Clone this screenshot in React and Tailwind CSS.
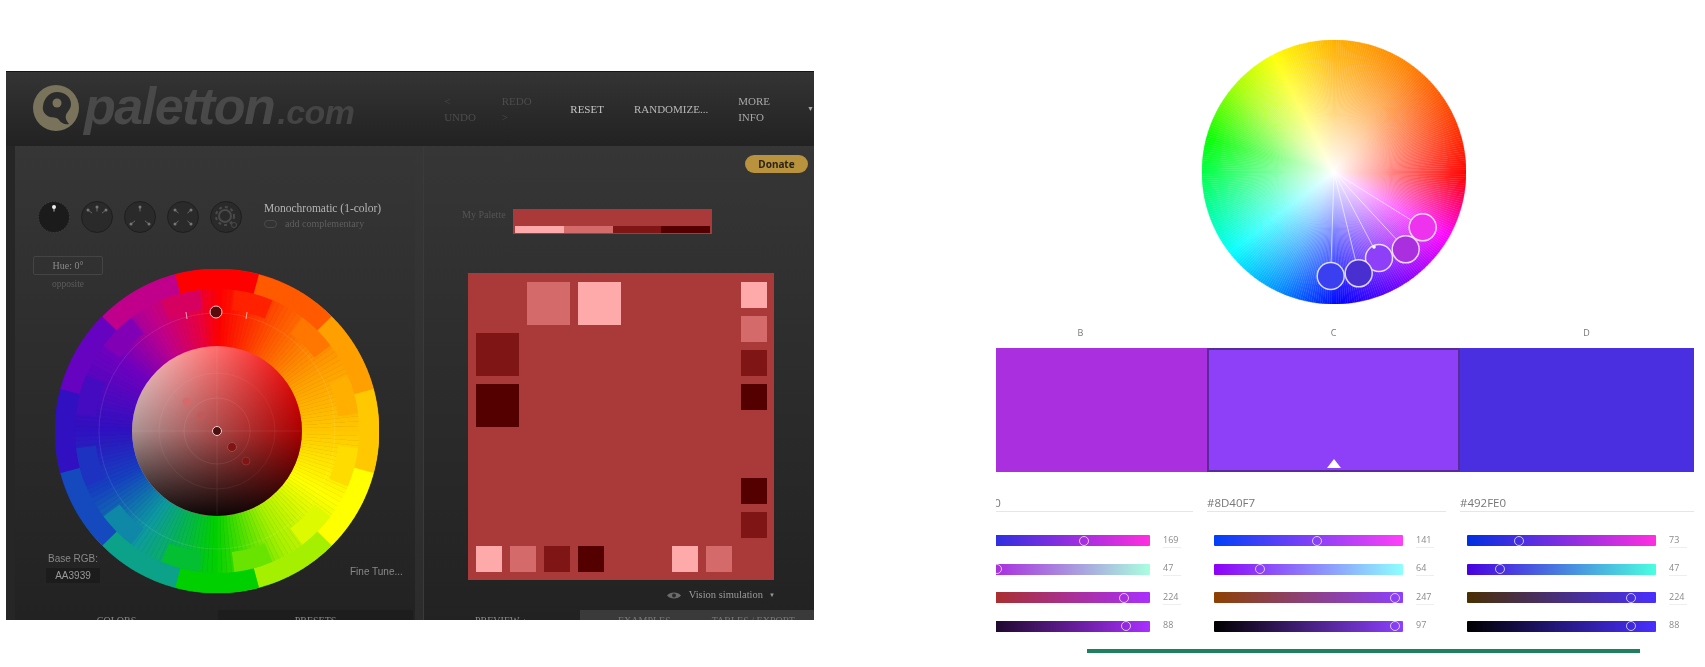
import React from 'react';

const lerp = (a, b, t) => a + (b - a) * t;
const hex = (c) => [1, 3, 5].map((i) => parseInt(c.slice(i, i + 2), 16));

// angle (clockwise from top) -> colour
const colorAt = (stops, angle) => {
  const a = ((angle % 360) + 360) % 360;
  for (let i = 0; i < stops.length - 1; i++) {
    const [a0, c0] = stops[i];
    const [a1, c1] = stops[i + 1];
    if (a >= a0 && a <= a1) {
      const t = (a - a0) / (a1 - a0);
      const x = hex(c0);
      const y = hex(c1);
      return `rgb(${x.map((v, k) => Math.round(lerp(v, y[k], t))).join(',')})`;
    }
  }
  return stops[0][1];
};

const wedge = (cx, cy, r0, r1, a0, a1) => {
  const p = (r, a) => {
    const rad = ((a - 90) * Math.PI) / 180;
    return `${(cx + r * Math.cos(rad)).toFixed(2)} ${(cy + r * Math.sin(rad)).toFixed(2)}`;
  };
  return `M${p(r0, a0)} A${r0} ${r0} 0 0 1 ${p(r0, a1)} L${p(r1, a1)} A${r1} ${r1} 0 0 0 ${p(r1, a0)} Z`;
};

const rybStops = [
  [0, '#ff0000'], [30, '#ff5a00'], [45, '#ff8000'], [60, '#ffa000'], [90, '#ffc800'],
  [120, '#ffff00'], [150, '#a5f000'], [180, '#00d000'], [215, '#0d9aa0'], [243, '#1540c0'],
  [270, '#3010c0'], [306, '#7000c0'], [330, '#c0008a'], [350, '#e80040'], [360, '#ff0000'],
];

const rgbStops = [
  [0, '#ffb000'], [35, '#ff8000'], [92, '#ff0000'], [119, '#ff00ff'], [150, '#7000ff'],
  [177, '#0000ff'], [205, '#0090ff'], [232, '#00ffff'], [258, '#00ff80'], [284, '#00ff00'],
  [310, '#a0ff00'], [332, '#ffff00'], [360, '#ffb000'],
];

const range = (n) => Array.from({ length: n }, (_, i) => i);

const Logo = () => (
  <svg width="48" height="48" viewBox="0 0 48 48" className="shrink-0">
    <circle cx="23" cy="23" r="23" fill="#78735a" />
    <path d="M24 7c8 0 14 5 14 12 0 5-4 8-5 11-1 4 1 6 3 9-4 1-8-1-10-4-2-3-5-2-9-3-5-2-8-6-7-11 1-8 7-14 14-14z" fill="#2b2b2b" />
    <circle cx="24" cy="18" r="4.5" fill="#78735a" />
  </svg>
);

const ModeIcon = ({ active, kind }) => {
  const dots = {
    mono: [[0, -10]],
    adjacent: [[-9, -7], [0, -10], [9, -7]],
    triad: [[0, -10], [-9, 7], [9, 7]],
    tetrad: [[-8, -7], [8, -7], [-8, 7], [8, 7]],
    free: [],
  }[kind];
  return (
    <svg width="32" height="32" viewBox="-16 -16 32 32">
      <circle r="15.5" fill={active ? '#1b1b1b' : '#2a2a2a'} stroke={active ? '#444' : '#1f1f1f'} strokeDasharray={active ? '1.5 1.5' : undefined} />
      {dots.map(([x, y], i) => (
        <g key={i}>
          <line x1={x * 0.55} y1={y * 0.55} x2={x} y2={y} stroke={active ? '#bbb' : '#666'} strokeWidth="1" />
          <circle cx={x} cy={y} r={active ? 2 : 1.5} fill={active ? '#eee' : '#777'} />
        </g>
      ))}
      {kind === 'free' && (
        <g fill="none" stroke="#4a4a4a" strokeWidth="2">
          <circle cx="-1" cy="-1" r="6" />
          <circle cx="-1" cy="-1" r="9" strokeDasharray="3 3" />
          <circle cx="8" cy="8" r="2.5" strokeWidth="1" />
        </g>
      )}
    </svg>
  );
};

const ColorWheel = () => (
  <svg width="324" height="324" viewBox="0 0 324 324" className="block">
    <defs>
      <linearGradient id="shadeH" x1="0" x2="1" y1="0" y2="0">
        <stop offset="0" stopColor="#ffd9d9" />
        <stop offset="1" stopColor="#ff0000" />
      </linearGradient>
      <linearGradient id="shadeV" x1="0" x2="0" y1="0" y2="1">
        <stop offset="0" stopColor="#000" stopOpacity="0" />
        <stop offset="0.5" stopColor="#000" stopOpacity="0.33" />
        <stop offset="1" stopColor="#000" stopOpacity="0.95" />
      </linearGradient>
    </defs>
    {range(180).map((i) => {
      const c = colorAt(rybStops, i * 2);
      return <path key={i} d={wedge(162, 162, 80, 162, i * 2, i * 2 + 2)} fill={c} stroke={c} strokeWidth="0.6" />;
    })}
    {range(12).map((i) => {
      const c = colorAt(rybStops, i * 30);
      return <path key={i} d={wedge(162, 162, 142, 162, i * 30 - 15, i * 30 + 15)} fill={c} />;
    })}
    {range(12).map((i) => {
      const c = colorAt(rybStops, i * 30 + 11);
      return <path key={i} d={wedge(162, 162, 122, 142, i * 30 + 7, i * 30 + 23)} fill={c} />;
    })}
    <circle cx="162" cy="162" r="118" fill="none" stroke="#fff" strokeOpacity="0.1" />
    <circle cx="162" cy="162" r="85" fill="url(#shadeH)" />
    <circle cx="162" cy="162" r="85" fill="url(#shadeV)" />
    <circle cx="162" cy="162" r="33" fill="none" stroke="#fff" strokeOpacity="0.08" />
    <circle cx="162" cy="162" r="58" fill="none" stroke="#fff" strokeOpacity="0.06" />
    <path d="M77 162H247M162 77V247" stroke="#fff" strokeOpacity="0.07" />
    <path d="M131 43l1 7M192 43l-1 7" stroke="#fff" strokeOpacity="0.6" />
    <circle cx="161" cy="43" r="6" fill="#5a0c0c" stroke="#f3c4c4" strokeWidth="1" />
    <circle cx="132" cy="133" r="4" fill="#d46a6a" />
    <circle cx="146" cy="147" r="4" fill="#c05a5a" />
    <circle cx="232" cy="0" r="0" />
    <circle cx="177" cy="178" r="4.5" fill="#801515" stroke="#a04a4a" />
    <circle cx="191" cy="192" r="4" fill="#801515" stroke="#8a3030" />
    <circle cx="162" cy="162" r="4.5" fill="#4a0f0f" stroke="#f0d0d0" strokeWidth="1" />
  </svg>
);

const Swatch = ({ size, color, className = '' }) => (
  <div className={`${size === 'lg' ? 'w-[43px] h-[43px]' : 'w-[26px] h-[26px]'} ${className}`} style={{ background: color }} />
);

const LIGHT = '#ffaaaa';
const SOFT = '#d46a6a';
const DARK = '#801515';
const DEEP = '#550000';

const Preview = () => (
  <div className="mt-[39px] ml-[44px] w-[306px] h-[307px] bg-[#aa3939] p-[8px] pt-[9px] flex justify-between">
    <div className="flex flex-col justify-between">
      <div className="grid grid-cols-[43px_43px_43px] gap-[8px]">
        <div />
        <Swatch size="lg" color={SOFT} />
        <Swatch size="lg" color={LIGHT} />
        <Swatch size="lg" color={DARK} />
        <div />
        <div />
        <Swatch size="lg" color={DEEP} />
      </div>
      <div className="flex gap-[8px]">
        <Swatch color={LIGHT} />
        <Swatch color={SOFT} />
        <Swatch color={DARK} />
        <Swatch color={DEEP} />
        <Swatch color={LIGHT} className="ml-[60px]" />
        <Swatch color={SOFT} />
      </div>
    </div>
    <div className="flex flex-col justify-between pb-[34px] mr-[-1px]">
      <div className="flex flex-col gap-[8px]">
        <Swatch color={LIGHT} />
        <Swatch color={SOFT} />
        <Swatch color={DARK} />
        <Swatch color={DEEP} />
      </div>
      <div className="flex flex-col gap-[8px]">
        <Swatch color={DEEP} />
        <Swatch color={DARK} />
      </div>
    </div>
  </div>
);

const PalettonPanel = () => (
  <div className="w-[808px] h-[549px] mt-[71px] shrink-0 overflow-hidden bg-[#242424] flex flex-col font-['Liberation_Serif',serif]">
    <header className="h-[75px] shrink-0 flex items-center border-t border-[#151515] bg-gradient-to-b from-[#343434] to-[#222222] pl-[27px]">
      <div className="w-[412px] flex items-center gap-[3px] font-['Liberation_Sans',sans-serif] italic">
        <Logo />
        <span className="text-[52px] leading-none font-bold text-[#494949] tracking-[-1.5px] pb-[6px]">paletton</span>
        <span className="text-[34px] leading-none font-bold text-[#444444] self-end pb-[9px] tracking-[-0.5px]">.com</span>
      </div>
      <nav className="flex items-center text-[11px] uppercase">
        <span className="text-[#4c4c4c]">&lt; Undo</span>
        <span className="text-[#4c4c4c] ml-[17px]">Redo &gt;</span>
        <span className="text-[#c4c4c4] ml-[30px]">Reset</span>
        <span className="text-[#b8b8b8] ml-[30px]">Randomize...</span>
        <span className="text-[#a8a8a8] ml-[30px]">More info</span>
        <span className="text-[#a8a8a8] ml-[9px] text-[7px]">▼</span>
      </nav>
    </header>

    <div className="flex-1 flex min-h-0 bg-gradient-to-b from-[#363636] to-[#222222]">
      <div className="w-[9px] shrink-0 bg-[#262626]" />

      {/* colour wheel column */}
      <section className="w-[400px] shrink-0 flex flex-col">
        <div className="flex items-center pt-[55px] pl-[23px]">
          <div className="flex gap-[11px]">
            <ModeIcon active kind="mono" />
            <ModeIcon kind="adjacent" />
            <ModeIcon kind="triad" />
            <ModeIcon kind="tetrad" />
            <ModeIcon kind="free" />
          </div>
          <div className="ml-[22px] -mt-[2px]">
            <p className="text-[11.5px] leading-[14px] text-[#b4b4b4]">Monochromatic (1-color)</p>
            <div className="flex items-center mt-[2px] text-[10px] leading-[14px] text-[#5e5e5e]">
              <span className="w-[13px] h-[8px] rounded-full border border-[#4a4a4a] mr-[8px]" />
              add complementary
            </div>
          </div>
        </div>

        <div className="relative mt-[23px]">
          <div className="absolute left-[18px] top-0 w-[70px] text-center">
            <div className="h-[19px] border border-[#444] rounded-[2px] text-[10px] leading-[17px] text-[#8a8a8a]">Hue: 0°</div>
            <p className="text-[9.5px] leading-[12px] mt-[3px] text-[#5c5c5c]">opposite</p>
          </div>
          <div className="pt-[13px] pl-[40px]">
            <ColorWheel />
          </div>
          <div className="absolute left-[31px] bottom-[10px] w-[54px] text-center font-['Liberation_Sans',sans-serif] text-[10px]">
            <p className="leading-[12px] text-[#888]">Base RGB:</p>
            <div className="mt-[3px] h-[15px] leading-[15px] bg-[#1c1c1c] text-[#999]">AA3939</div>
          </div>
          <p className="absolute left-[335px] bottom-[15px] font-['Liberation_Sans',sans-serif] text-[10px] leading-[12px] text-[#888]">Fine Tune...</p>
        </div>

        <div className="mt-[17px] h-[10px] overflow-hidden flex text-[10px] uppercase text-[#8a8a8a]">
          <div className="w-[203px] text-center pt-[3px]">Colors</div>
          <div className="w-[195px] text-center pt-[3px] bg-[#1d1d1d]">Presets</div>
        </div>
      </section>

      <div className="w-[9px] shrink-0 bg-gradient-to-b from-[#363636] to-[#2c2c2c] border-r border-[#3a3a3a]" />

      {/* palette column */}
      <section className="flex-1 min-w-0 flex flex-col">
        <div className="flex justify-end pt-[9px] pr-[6px]">
          <div className="w-[63px] h-[18px] rounded-full bg-[#b8923c] text-center font-['Noto_Sans',sans-serif] font-bold text-[10px] leading-[18px] text-[#2a2418]">Donate</div>
        </div>
        <div className="flex items-start mt-[36px] pl-[38px]">
          <span className="w-[51px] text-[10px] leading-[12px] text-[#555]">My Palette</span>
          <div className="w-[199px] h-[25px] bg-[#aa3939] pt-[17px] px-[2px]">
            <div className="flex h-[7px]">
              <div className="flex-1 bg-[#ffaaaa]" />
              <div className="flex-1 bg-[#d46a6a]" />
              <div className="flex-1 bg-[#801515]" />
              <div className="flex-1 bg-[#550000]" />
            </div>
          </div>
        </div>
        <Preview />
        <div className="h-[30px] shrink-0 flex items-center justify-end pr-[39px] text-[10.5px] text-[#999]">
          <svg width="14" height="9" viewBox="0 0 14 9" className="mr-[8px]">
            <path d="M0 4.5C3 .5 11 .5 14 4.5 11 8.5 3 8.5 0 4.5z" fill="#6c6c6c" />
            <circle cx="7" cy="4.5" r="2" fill="#2a2a2a" />
          </svg>
          Vision simulation
          <span className="ml-[6px] text-[6px]">▼</span>
        </div>
        <div className="h-[10px] overflow-hidden flex text-[10px] uppercase text-[#8a8a8a]">
          <div className="w-[156px] pl-[51px] pt-[3px]">Preview ▴</div>
          <div className="flex-1 bg-[#3a3a3a] flex pt-[3px] pl-[38px] text-[#777]">
            <span>Examples</span>
            <span className="ml-[41px]">Tables / Export</span>
          </div>
        </div>
      </section>
    </div>
  </div>
);

const AdobeWheel = () => {
  const handles = [
    [220.7, 187.3, '#ee33ee'],
    [203.7, 209.3, '#a92fdf'],
    [177, 218, '#8d40f7'],
    [156.7, 233.3, '#4a2fd0'],
    [128.7, 236, '#3a3fef'],
  ];
  return (
    <svg width="264" height="264" viewBox="0 0 264 264" className="block ml-[206px] mt-[40px]">
      <defs>
        <radialGradient id="wash">
          <stop offset="0" stopColor="#fff" stopOpacity="1" />
          <stop offset="0.5" stopColor="#fff" stopOpacity="0.45" />
          <stop offset="1" stopColor="#fff" stopOpacity="0" />
        </radialGradient>
      </defs>
      {range(360).map((i) => {
        const c = colorAt(rgbStops, i);
        return <path key={i} d={wedge(132, 132, 0.01, 132, i, i + 1)} fill={c} stroke={c} strokeWidth="0.4" />;
      })}
      <circle cx="132" cy="132" r="132" fill="url(#wash)" />
      {handles.map(([x, y], i) => (
        <line key={i} x1="132" y1="132" x2={x} y2={y} stroke="#fff" strokeOpacity="0.6" strokeWidth="1" />
      ))}
      {handles.map(([x, y, c], i) => (
        <circle key={i} cx={x} cy={y} r="13.5" fill={c} stroke="#fff" strokeOpacity="0.8" strokeWidth="1.5" />
      ))}
      <circle cx="172" cy="207" r="1.8" fill="#fff" />
    </svg>
  );
};

const channels = [
  {
    label: 'B',
    hex: '#A92FE0',
    outer: 'w-[211px]',
    shift: '-ml-[42px]',
    swatch: 'bg-[#a92fdf]',
    rows: [
      { value: 169, knob: 130, from: '#002fdf', to: '#ff2fdf' },
      { value: 47, knob: 43, from: '#a900df', to: '#a9ffdf' },
      { value: 224, knob: 170, from: '#a92f00', to: '#a92fff' },
      { value: 88, knob: 172, from: '#000000', to: '#a92fff' },
    ],
  },
  {
    label: 'C',
    hex: '#8D40F7',
    outer: 'w-[253px]',
    shift: '',
    swatch: 'bg-[#8d40f7] border-2 border-[#5a2a9c]',
    selected: true,
    rows: [
      { value: 141, knob: 110, from: '#0040f7', to: '#ff40f7' },
      { value: 64, knob: 53, from: '#8d00f7', to: '#8dffff' },
      { value: 247, knob: 188, from: '#8d4000', to: '#8d40ff' },
      { value: 97, knob: 188, from: '#000000', to: '#8d40ff' },
    ],
  },
  {
    label: 'D',
    hex: '#492FE0',
    outer: 'w-[234px]',
    shift: '',
    swatch: 'bg-[#492fe0]',
    rows: [
      { value: 73, knob: 59, from: '#002fe0', to: '#ff2fe0' },
      { value: 47, knob: 40, from: '#4900e0', to: '#49ffe0' },
      { value: 224, knob: 171, from: '#492f00', to: '#492fff' },
      { value: 88, knob: 171, from: '#000000', to: '#492fff' },
    ],
  },
];

const Slider = ({ row }) => (
  <div className="flex items-center h-[11px] pl-[7px]">
    <div
      className="relative w-[189px] h-[11px] rounded-[1px] shrink-0"
      style={{ background: `linear-gradient(to right, ${row.from}, ${row.to})` }}
    >
      <div
        className="absolute top-[0.5px] w-[10px] h-[10px] rounded-full border-[1.5px] border-white/70 -translate-x-1/2"
        style={{ left: row.knob - 7 + 'px' }}
      />
    </div>
    <span className="ml-[13px] w-[18px] border-b border-[#eeeeee] text-[9px] leading-[12px] pb-[1px] text-[#8a8a8a]">{row.value}</span>
  </div>
);

const ChannelColumn = ({ c }) => (
  <div className={`${c.outer} overflow-hidden shrink-0`}>
    <div className={`w-[253px] ${c.shift}`}>
      <p className="mt-[24px] mb-[10px] h-[10px] text-center text-[9px] leading-[10px] text-[#777]">{c.label}</p>
      <div className={`relative h-[124px] ${c.swatch}`}>
        {c.selected && (
          <div className="absolute bottom-[2px] left-1/2 -translate-x-1/2 w-0 h-0 border-l-[7px] border-r-[7px] border-b-[9px] border-l-transparent border-r-transparent border-b-white" />
        )}
      </div>
      <div className="mt-[24px] h-[16px] w-[239px] border-b border-[#e6e6e6] text-[11.5px] leading-[14px] text-[#777]">{c.hex}</div>
      <div className="mt-[23px] flex flex-col gap-[17.5px]">
        {c.rows.map((row, i) => (
          <Slider key={i} row={row} />
        ))}
      </div>
    </div>
  </div>
);

const App = () => {
  return (
    <div className="w-[1705px] h-[667px] bg-white overflow-hidden flex pl-[6px] blur-[0.5px]">
      <PalettonPanel />
      <main className="ml-[182px] w-[698px] font-['Open_Sans',sans-serif]">
        <AdobeWheel />
        <div className="flex">
          {channels.map((c) => (
            <ChannelColumn key={c.label} c={c} />
          ))}
        </div>
        <div className="mt-[17px] ml-[91px] w-[553px] h-[4px] bg-[#1f7f5f]" />
      </main>
    </div>
  );
};

export default App;
